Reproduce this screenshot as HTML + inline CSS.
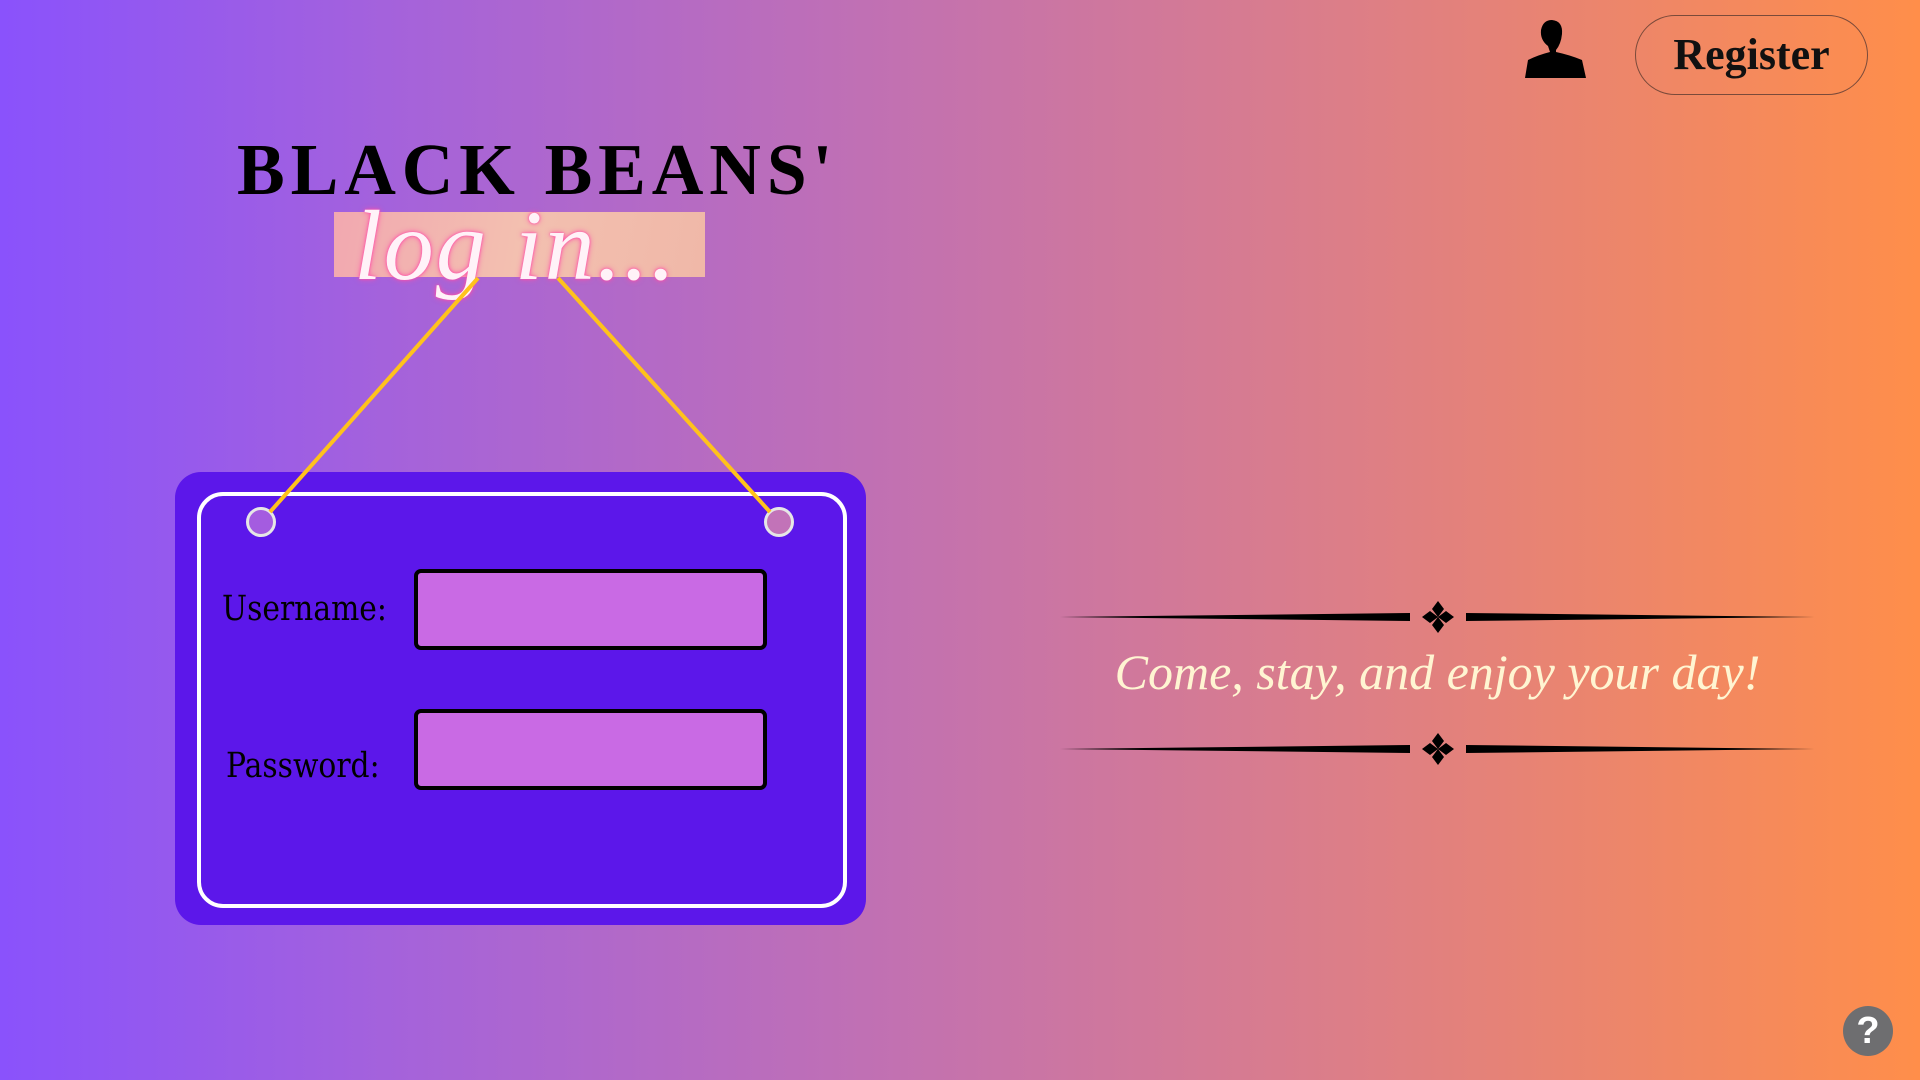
<!DOCTYPE html>
<html><head><meta charset="utf-8"><style>
html,body{margin:0;padding:0}
body{width:1920px;height:1080px;position:relative;overflow:hidden;background:linear-gradient(90deg,#8a52fc 0%,#a462dc 20%,#c070b4 45%,#dc7e88 70%,#ff8e4a 100%);font-family:"Liberation Serif",serif}
.abs{position:absolute}
.title{left:237px;top:128px;font-size:73px;font-weight:bold;letter-spacing:6px;color:#000;font-family:"Liberation Serif",serif;white-space:nowrap;transform:scaleX(.98);transform-origin:left}
.tape{left:334px;top:212px;width:371px;height:65px;background:linear-gradient(100deg,#f2a8b0,#f3c0b0 50%,#f0b8a8)}
.login{left:354px;top:188px;font-size:100px;font-style:italic;color:#fff2f8;font-family:"Liberation Serif",serif;text-shadow:0 0 6px #ff4fa8,0 0 2px #ff4fa8;letter-spacing:2px}
.sign{left:175px;top:472px;width:691px;height:453px;background:#5c17ea;border-radius:26px}
.inner{left:197px;top:492px;width:642px;height:408px;border:4px solid #fff;border-radius:26px}
.hole{width:24px;height:24px;border:3px solid #e6e6e6;border-radius:50%}
.inp{left:414px;width:345px;height:73px;background:#c96ae4;border:4px solid #000;border-radius:7px}
.lbl{font-size:35px;color:#000;font-family:"DejaVu Serif","Liberation Serif",serif;font-weight:normal;transform:scaleX(.85);transform-origin:left}
.quote{left:1060px;width:755px;top:643px;text-align:center;font-size:50px;font-style:italic;color:#fff5d2;font-family:"Liberation Serif",serif}
.reg{left:1635px;top:15px;width:231px;height:78px;border:1px solid #7a4a3a;border-radius:40px;text-align:center;line-height:78px;font-size:44px;font-weight:bold;color:#111}
.help{left:1843px;top:1006px;width:50px;height:50px;border-radius:50%;background:#6e6e70;color:#fff;font:bold 38px/50px "Liberation Sans",sans-serif;text-align:center}
</style></head><body>
<div class="abs title">BLACK BEANS'</div>
<div class="abs tape"></div>
<div class="abs login">log in...</div>
<div class="abs sign"></div>
<div class="abs inner"></div>
<div class="abs hole" style="left:246px;top:507px;background:#a45ce0"></div>
<div class="abs hole" style="left:764px;top:507px;background:#c273b8"></div>
<svg class="abs" style="left:0;top:0" width="1920" height="1080">
<line x1="478" y1="278" x2="270" y2="512" stroke="#ffc21c" stroke-width="4"/>
<line x1="558" y1="278" x2="770" y2="512" stroke="#ffc21c" stroke-width="4"/>
<g fill="#000">
<polygon points="1060,617 1410,613 1410,621"/><polygon points="1815,617 1466,613 1466,621"/>
<polygon points="1060,749 1410,745 1410,753"/><polygon points="1815,749 1466,745 1466,753"/>
<path d="M1438,601 l6,8 -6,8 -6,-8z M1438,617 l6,8 -6,8 -6,-8z M1422,617 l8,-6 8,6 -8,6z M1438,617 l8,-6 8,6 -8,6z"/>
<path d="M1438,733 l6,8 -6,8 -6,-8z M1438,749 l6,8 -6,8 -6,-8z M1422,749 l8,-6 8,6 -8,6z M1438,749 l8,-6 8,6 -8,6z"/>
</g>
<path d="M1525,78 L1528,60 Q1538,55 1550,52 L1548,46 Q1540,40 1541,30 Q1543,20 1552,20 Q1563,21 1562,34 Q1561,44 1556,50 L1556,52 Q1570,55 1582,60 L1586,78Z" fill="#000"/>
</svg>
<div class="abs inp" style="top:569px"></div>
<div class="abs inp" style="top:709px"></div>
<div class="abs lbl" style="left:222px;top:589px">Username:</div>
<div class="abs lbl" style="left:226px;top:746px">Password:</div>
<div class="abs quote">Come, stay, and enjoy your day!</div>
<div class="abs reg">Register</div>
<div class="abs help">?</div>
</body></html>
